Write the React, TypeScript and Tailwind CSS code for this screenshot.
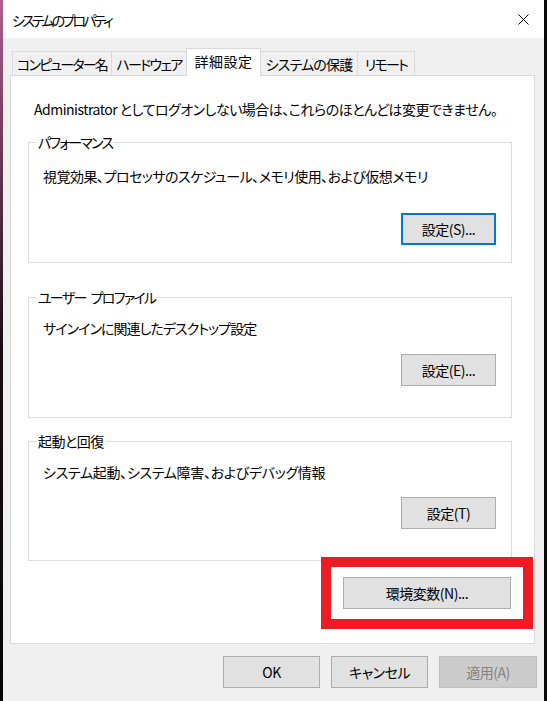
import React from 'react'

const tabs = [
  { label: 'コンピューター名', w: 'w-[100px]', tr: 'tracking-[-1.8px]' },
  { label: 'ハードウェア', w: 'w-[76px]', tr: 'tracking-[-1.7px]' },
  { label: '詳細設定', w: 'w-[75px]', tr: 'tracking-[0.5px]', active: true },
  { label: 'システムの保護', w: 'w-[98px]', tr: 'tracking-[-0.8px]' },
  { label: 'リモート', w: 'w-[58px]', tr: 'tracking-[-1.7px]' },
]

function WinButton({
  children,
  className = '',
  focused = false,
  disabled = false,
}: {
  children: React.ReactNode
  className?: string
  focused?: boolean
  disabled?: boolean
}) {
  const border = focused
    ? 'border-2 border-[#0078d7] bg-[#e1e1e1] text-black'
    : disabled
      ? 'border border-[#bfbfbf] bg-[#cccccc] text-[#838383]'
      : 'border border-[#adadad] bg-[#e1e1e1] text-black'
  return (
    <div className={`flex h-[32px] items-center justify-center ${border} ${className}`}>
      {children}
    </div>
  )
}

function Group({
  title,
  desc,
  button,
  focused,
  className,
  descTop,
  buttonTop,
  titleTr = '',
  descTr = '',
}: {
  title: React.ReactNode
  desc: string
  button: string
  focused?: boolean
  className: string
  descTop: string
  buttonTop: string
  titleTr?: string
  descTr?: string
}) {
  return (
    <div className={`relative w-[484px] border border-[#dcdcdc] ${className}`}>
      <span className={`absolute -top-[11px] left-[7px] flex bg-white px-[2px] ${titleTr}`}>{title}</span>
      <div className={`pl-[14px] ${descTop} ${descTr}`}>{desc}</div>
      <div className={`flex justify-end pr-[15px] ${buttonTop}`}>
        <WinButton focused={focused} className="w-[95px]">
          {button}
        </WinButton>
      </div>
    </div>
  )
}

export default function App() {
  return (
    <div className="relative flex h-[701px] w-[547px] overflow-hidden whitespace-nowrap bg-[#f0f0f0] font-['Noto_Sans_CJK_JP',sans-serif] text-[14px] leading-[20px] tracking-[-0.5px] text-black [font-feature-settings:'palt']">
      <div className="w-[3px] bg-gradient-to-b from-[#b0608f] via-[#1a0c16] to-[#050505]" />
      <div className="flex flex-1 flex-col">
        <div className="flex h-[38px] items-center justify-between bg-white pl-[9px] pr-[15px]">
          <span className="mt-[1px] tracking-[-2.8px]">システムのプロパティ</span>
          <svg width="11" height="11" viewBox="0 0 11 11" className="mt-[1px]">
            <path d="M0.5 0.5 L10.5 10.5 M10.5 0.5 L0.5 10.5" stroke="#000" strokeWidth="1" />
          </svg>
        </div>

        <div className="ml-[7px] mt-[10px] flex h-[27px] items-end pl-[2px]">
          {tabs.map((t) =>
            t.active ? (
              <div
                key={t.label}
                className={`relative z-10 -mb-px -ml-px flex h-[28px] items-center justify-center border border-b-0 border-[#d9d9d9] bg-white pb-[3px] ${t.w} ${t.tr}`}
              >
                {t.label}
              </div>
            ) : (
              <div
                key={t.label}
                className={`-ml-px flex h-[24px] items-center justify-center border border-b-0 border-[#d9d9d9] bg-[#f0f0f0] first:ml-0 ${t.w} ${t.tr}`}
              >
                {t.label}
              </div>
            ),
          )}
        </div>

        <div className="ml-[7px] flex h-[569px] w-[525px] flex-col border border-[#d9d9d9] bg-white pl-[17px]">
          <div className="mt-[23px] pl-[6px]">
            Administrator としてログオンしない場合は、これらのほとんどは変更できません。
          </div>
          <Group
            title="パフォーマンス"
            titleTr="tracking-[-1.8px]"
            desc="視覚効果、プロセッサのスケジュール、メモリ使用、および仮想メモリ"
            button="設定(S)..."
            focused
            className="mt-[23px] h-[121px]"
            descTop="mt-[23px]"
            buttonTop="mt-[27px]"
          />
          <Group
            title={
              <>
                <span>ユーザー</span>
                <span className="ml-[5px]">プロファイル</span>
              </>
            }
            titleTr="tracking-[-1.7px]"
            desc="サインインに関連したデスクトップ設定"
            descTr="tracking-[-0.95px]"
            button="設定(E)..."
            className="mt-[34px] h-[121px]"
            descTop="mt-[20px]"
            buttonTop="mt-[16px]"
          />
          <Group
            title="起動と回復"
            desc="システム起動、システム障害、およびデバッグ情報"
            descTr="tracking-[-0.3px]"
            button="設定(T)"
            className="mt-[23px] h-[120px]"
            descTop="mt-[20px]"
            buttonTop="mt-[15px]"
          />
          <div className="mt-[16px] flex w-[484px] justify-end pr-[1px]">
            <WinButton className="w-[168px]">環境変数(N)...</WinButton>
          </div>
        </div>

        <div className="mt-[12px] flex pl-[220px]">
          <WinButton className="w-[97px]">OK</WinButton>
          <WinButton className="ml-[11px] w-[97px]">キャンセル</WinButton>
          <WinButton disabled className="ml-[11px] w-[98px]">
            適用(A)
          </WinButton>
        </div>
      </div>
      <div className="w-[3px] bg-[#0a0a0a]" />

      <div className="pointer-events-none absolute left-[321px] top-[557px] h-[72px] w-[212px] border-[10px] border-[#ed1c24]" />
    </div>
  )
}
